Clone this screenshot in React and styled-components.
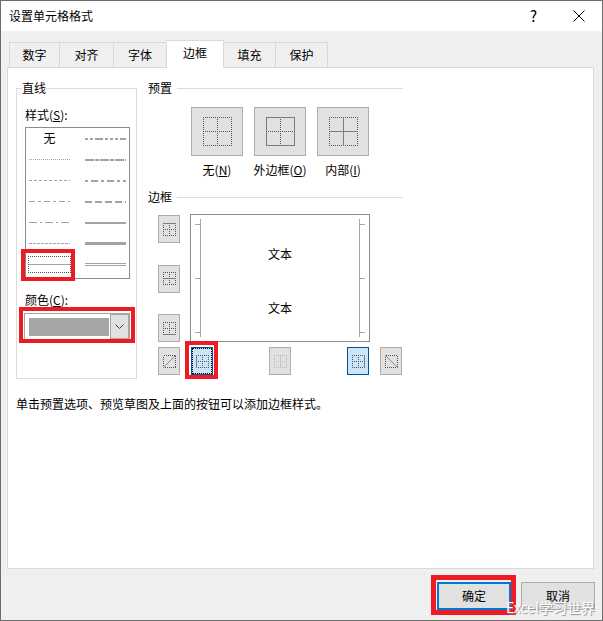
import React from "react";
import styled, { createGlobalStyle, css } from "styled-components";

const GlobalStyle = createGlobalStyle`
  html, body {
    margin: 0;
    padding: 0;
    background: #f0f0f0;
  }
  * {
    box-sizing: border-box;
  }
`;

const DialogWindow = styled.div`
  position: relative;
  width: 603px;
  height: 621px;
  display: flex;
  flex-direction: column;
  background-color: #f0f0f0;
  background-image: radial-gradient(#e6e6e6 0.6px, transparent 0.8px);
  background-size: 6px 6px;
  border: 1px solid #6d6d6d;
  font-family: "Noto Sans CJK SC", "Microsoft YaHei", sans-serif;
  font-size: 12px;
  line-height: 16px;
  color: #000;
  overflow: hidden;
`;

const TitleBar = styled.div`
  height: 30px;
  flex: none;
  display: flex;
  align-items: center;
  padding: 0 17px 0 8px;
  background: #fff;
`;

const Title = styled.div`
  flex: 1;
`;

const HelpMark = styled.span`
  font-size: 15px;
  margin-right: 36px;
`;

const TabRow = styled.div`
  display: flex;
  align-items: flex-end;
  height: 27px;
  margin: 9px 0 0 8px;
  flex: none;
  position: relative;
  z-index: 1;
`;

const Tab = styled.div`
  width: ${(p) => p.$width}px;
  height: 25px;
  display: flex;
  align-items: center;
  justify-content: center;
  border: 1px solid #d9d9d9;
  border-left-width: ${(p) => (p.$first ? 1 : 0)}px;
  border-bottom: 0;
  ${(p) =>
    p.$active &&
    css`
      height: 28px;
      margin-bottom: -1px;
      background: #fff;
      padding-bottom: 3px;
    `}
`;

const Panel = styled.div`
  flex: 1;
  margin: 0 8px 0 6px;
  padding: 12px 8px 0;
  background: #fff;
  border: 1px solid #d9d9d9;
`;

const Columns = styled.div`
  display: flex;
  align-items: flex-start;
  gap: 11px;
`;

const LineGroup = styled.fieldset`
  width: 121px;
  height: 299px;
  margin: 0;
  padding: 11px 0 0 8px;
  border: 1px solid #dcdcdc;
  min-inline-size: 0;
`;

const GroupLegend = styled.legend`
  margin-left: -3px;
  padding: 0;
  line-height: 16px;
`;

const FieldLabel = styled.div`
  height: 16px;
  margin-bottom: ${(p) => p.$gap}px;
`;

const StyleList = styled.div`
  width: 105px;
  height: 152px;
  display: grid;
  grid-template-columns: 41px 41px;
  grid-auto-rows: 21px;
  column-gap: 15px;
  padding-left: 3px;
  border: 1px solid #8b8b93;
  margin-bottom: 13px;
`;

const StyleCell = styled.div`
  display: flex;
  align-items: center;
  justify-content: center;
  ${(p) =>
    p.$selected &&
    css`
      margin: 2px -1px;
      outline: 1px dotted #555;
      outline-offset: -1px;
    `}
`;

const NoneLabel = styled.span`
  margin-bottom: 2px;
`;

const ColorCombo = styled.div`
  width: 106px;
  height: 27px;
  margin-left: -1px;
  display: flex;
  align-items: stretch;
  padding: 4px 0 3px 4px;
  background: #fff;
  border: 1px solid #a6a6a6;
`;

const ColorSwatch = styled.div`
  width: 80px;
  background-color: #a5a5a5;
  background-image: radial-gradient(#a0a0a0 0.6px, transparent 0.8px);
  background-size: 8px 6px;
`;

const ComboArrow = styled.div`
  width: 19px;
  margin: -4px 0 -3px auto;
  display: flex;
  align-items: center;
  justify-content: center;
  background: #e1e1e1;
  border: 1px solid #a6a6a6;
`;

const RightColumn = styled.div`
  width: 255px;
  display: flex;
  flex-direction: column;
`;

const SectionTitle = styled.div`
  display: flex;
  align-items: center;
  gap: 5px;
  height: 16px;
  &::after {
    content: "";
    flex: 1;
    height: 1px;
    background: #dcdcdc;
  }
`;

const PresetRow = styled.div`
  display: grid;
  grid-template-columns: repeat(3, 52px);
  column-gap: 11px;
  row-gap: 6px;
  margin: 11px 0 11px 43px;
  justify-items: center;
`;

const PresetButton = styled.div`
  width: 52px;
  height: 49px;
  display: flex;
  align-items: center;
  justify-content: center;
  background: #e1e1e1;
  border: 1px solid #adadad;
`;

const PresetLabel = styled.div`
  white-space: nowrap;
`;

const BorderArea = styled.div`
  margin: 9px 0 0 10px;
`;

const PreviewRow = styled.div`
  display: flex;
  gap: 10px;
  height: 128px;
`;

const SideButtons = styled.div`
  width: 22px;
  padding-top: 1px;
  display: flex;
  flex-direction: column;
  justify-content: space-between;
`;

const GlyphButton = styled.div`
  width: 22px;
  height: 28px;
  display: flex;
  align-items: center;
  justify-content: center;
  background: #e1e1e1;
  border: 1px solid #adadad;
  ${(p) =>
    p.$on &&
    css`
      background: #cce4f7;
      border-color: #005499;
    `}
  ${(p) =>
    p.$focus &&
    css`
      outline: 1px dotted #000;
      outline-offset: -2px;
    `}
`;

const Preview = styled.div`
  position: relative;
  width: 180px;
  height: 128px;
  padding-top: 31px;
  display: flex;
  flex-direction: column;
  align-items: center;
  gap: 38px;
  border: 1px solid #8b8b93;
`;

const PreviewMarks = styled.svg`
  position: absolute;
  left: 0;
  top: 0;
`;

const BottomButtons = styled.div`
  display: grid;
  grid-template-columns: 33px 78px 78px 33px 22px;
  margin-top: 5px;
`;

const Hint = styled.div`
  margin-top: 17px;
`;

const Footer = styled.div`
  height: 51px;
  flex: none;
  display: flex;
  justify-content: flex-end;
  align-items: flex-start;
  gap: 10px;
  padding: 13px 7px 0 0;
`;

const DialogButton = styled.div`
  width: 74px;
  height: 28px;
  display: flex;
  align-items: center;
  justify-content: center;
  background: #e1e1e1;
  border: ${(p) => (p.$primary ? "2px solid #0078d7" : "1px solid #adadad")};
`;

const RedMark = styled.div`
  position: absolute;
  left: ${(p) => p.$x}px;
  top: ${(p) => p.$y}px;
  width: ${(p) => p.$w}px;
  height: ${(p) => p.$h}px;
  border: ${(p) => p.$t}px solid #ed1c24;
`;

const Watermark = styled.div`
  position: absolute;
  left: 505px;
  top: 598px;
  font-size: 14px;
  line-height: 16px;
  color: #fff;
  text-shadow: 1px 1px 1px #8c8c8c;
  white-space: nowrap;
`;

const CloseIcon = () => (
  <svg width="12" height="12" viewBox="0 0 12 12">
    <path d="M.5.5l11 11M11.5.5l-11 11" stroke="#000" strokeWidth="1" fill="none" />
  </svg>
);

const LineSample = ({ dash, width = 1, double, color = "#a3a3a3" }) => {
  const y = width % 2 === 0 ? 3 : 2.5;
  return (
    <svg width="41" height="5" viewBox="0 0 41 5" shapeRendering="crispEdges">
      {double ? (
        <>
          <line x1="0" x2="41" y1="1.5" y2="1.5" stroke={color} />
          <line x1="0" x2="41" y1="3.5" y2="3.5" stroke={color} />
        </>
      ) : (
        <line x1="0" x2="41" y1={y} y2={y} stroke={color} strokeWidth={width} strokeDasharray={dash} />
      )}
    </svg>
  );
};

// dotted cell grid used on every border button, solid lists the lines that are set
const BorderGlyph = ({ size = 13, solid = [], pale, solidColor = "#7d7d7d" }) => {
  const e = size - 0.5;
  const m = Math.floor(size / 2) + 0.5;
  const lines = {
    top: [0, 0.5, size, 0.5],
    bottom: [0, e, size, e],
    left: [0.5, 0, 0.5, size],
    right: [e, 0, e, size],
    hmid: [0, m, size, m],
    vmid: [m, 0, m, size],
  };
  const dotted = pale ? "#b5b5b5" : "#555";
  return (
    <svg width={size} height={size} viewBox={`0 0 ${size} ${size}`} shapeRendering="crispEdges">
      {Object.entries(lines).map(([key, l]) =>
        solid.includes(key) ? null : (
          <line key={key} x1={l[0]} y1={l[1]} x2={l[2]} y2={l[3]} stroke={dotted} strokeDasharray="1 1" />
        )
      )}
      {solid.map((key) => {
        const l = lines[key];
        return <line key={key} x1={l[0]} y1={l[1]} x2={l[2]} y2={l[3]} stroke={pale ? "#c4c4c4" : solidColor} />;
      })}
    </svg>
  );
};

const DiagonalGlyph = ({ up }) => (
  <svg width="13" height="13" viewBox="0 0 13 13">
    <rect x=".5" y=".5" width="12" height="12" fill="none" stroke="#555" strokeDasharray="1 1" shapeRendering="crispEdges" />
    <line x1="0" y1={up ? 13 : 0} x2="13" y2={up ? 0 : 13} stroke="#8a8a8a" />
  </svg>
);

const lineStyles = [
  { none: true },
  { dash: "3 2 3 2 8 2 3 2", width: 2 },
  { dash: "1 1" },
  { dash: "9 1 4 1", width: 2 },
  { dash: "3 2" },
  { dash: "3 3 7 3", width: 2 },
  { dash: "6 3 3 3" },
  { dash: "7 3", width: 2 },
  { dash: "8 3 2 3" },
  { width: 2 },
  { dash: "3 1" },
  { width: 3 },
  { selected: true },
  { double: true },
];

const tabs = [
  ["数字", 51],
  ["对齐", 54],
  ["字体", 53],
  ["边框", 57],
  ["填充", 52],
  ["保护", 52],
];

const App = () => {
  return (
    <DialogWindow>
      <GlobalStyle />
      <TitleBar>
        <Title>设置单元格格式</Title>
        <HelpMark>?</HelpMark>
        <CloseIcon />
      </TitleBar>
      <TabRow>
        {tabs.map(([name, width], i) => (
          <Tab key={name} $width={width} $first={i === 0} $active={name === "边框"}>
            {name}
          </Tab>
        ))}
      </TabRow>
      <Panel>
        <Columns>
          <LineGroup>
            <GroupLegend>直线</GroupLegend>
            <FieldLabel $gap={4}>
              样式(<u>S</u>):
            </FieldLabel>
            <StyleList>
              {lineStyles.map((item, i) => (
                <StyleCell key={i} $selected={item.selected}>
                  {item.none ? <NoneLabel>无</NoneLabel> : <LineSample {...item} />}
                </StyleCell>
              ))}
            </StyleList>
            <FieldLabel $gap={5}>
              颜色(<u>C</u>):
            </FieldLabel>
            <ColorCombo>
              <ColorSwatch />
              <ComboArrow>
                <svg width="9" height="5" viewBox="0 0 9 5">
                  <path d="M.5.5l4 4 4-4" fill="none" stroke="#444" />
                </svg>
              </ComboArrow>
            </ColorCombo>
          </LineGroup>
          <RightColumn>
            <SectionTitle>预置</SectionTitle>
            <PresetRow>
              <PresetButton>
                <BorderGlyph size={29} />
              </PresetButton>
              <PresetButton>
                <BorderGlyph size={29} solid={["top", "bottom", "left", "right"]} />
              </PresetButton>
              <PresetButton>
                <BorderGlyph size={29} solid={["hmid", "vmid"]} />
              </PresetButton>
              <PresetLabel>
                无(<u>N</u>)
              </PresetLabel>
              <PresetLabel>
                外边框(<u>O</u>)
              </PresetLabel>
              <PresetLabel>
                内部(<u>I</u>)
              </PresetLabel>
            </PresetRow>
            <SectionTitle>边框</SectionTitle>
            <BorderArea>
              <PreviewRow>
                <SideButtons>
                  <GlyphButton>
                    <BorderGlyph solid={["top"]} />
                  </GlyphButton>
                  <GlyphButton>
                    <BorderGlyph solid={["hmid"]} />
                  </GlyphButton>
                  <GlyphButton>
                    <BorderGlyph solid={["bottom"]} />
                  </GlyphButton>
                </SideButtons>
                <Preview>
                  <PreviewMarks width="178" height="126" viewBox="0 0 178 126">
                    <path
                      d="M9.5 4v118M4 9.5h5M4 63.5h5M4 117.5h5M168.5 4v118M169 9.5h5M169 63.5h5M169 117.5h5"
                      fill="none"
                      stroke="#a6a6a6"
                      shapeRendering="crispEdges"
                    />
                  </PreviewMarks>
                  <span>文本</span>
                  <span>文本</span>
                </Preview>
              </PreviewRow>
              <BottomButtons>
                <GlyphButton>
                  <DiagonalGlyph up />
                </GlyphButton>
                <GlyphButton $on $focus>
                  <BorderGlyph solid={["left"]} />
                </GlyphButton>
                <GlyphButton>
                  <BorderGlyph solid={["vmid"]} pale />
                </GlyphButton>
                <GlyphButton $on>
                  <BorderGlyph solid={["right"]} />
                </GlyphButton>
                <GlyphButton>
                  <DiagonalGlyph />
                </GlyphButton>
              </BottomButtons>
            </BorderArea>
          </RightColumn>
        </Columns>
        <Hint>单击预置选项、预览草图及上面的按钮可以添加边框样式。</Hint>
      </Panel>
      <Footer>
        <DialogButton $primary>确定</DialogButton>
        <DialogButton>取消</DialogButton>
      </Footer>
      <RedMark $x={20} $y={248} $w={54} $h={32} $t={4} />
      <RedMark $x={18} $y={306} $w={116} $h={36} $t={4} />
      <RedMark $x={184} $y={340} $w={33} $h={38} $t={4} />
      <RedMark $x={430} $y={574} $w={85} $h={40} $t={5} />
      <Watermark>Excel学习世界</Watermark>
    </DialogWindow>
  );
};

export default App;
